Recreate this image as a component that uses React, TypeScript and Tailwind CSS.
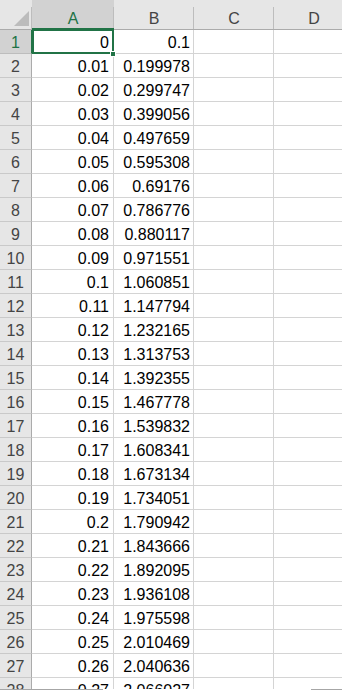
import React from "react";

const colA = [
  "0", "0.01", "0.02", "0.03", "0.04", "0.05", "0.06", "0.07", "0.08", "0.09",
  "0.1", "0.11", "0.12", "0.13", "0.14", "0.15", "0.16", "0.17", "0.18", "0.19",
  "0.2", "0.21", "0.22", "0.23", "0.24", "0.25", "0.26", "0.27",
];

const colB = [
  "0.1", "0.199978", "0.299747", "0.399056", "0.497659", "0.595308", "0.69176",
  "0.786776", "0.880117", "0.971551", "1.060851", "1.147794", "1.232165",
  "1.313753", "1.392355", "1.467778", "1.539832", "1.608341", "1.673134",
  "1.734051", "1.790942", "1.843666", "1.892095", "1.936108", "1.975598",
  "2.010469", "2.040636", "2.066027",
];

const font = { fontFamily: '"Liberation Sans", Arial, sans-serif' };

// header cell for the column letters
function ColHead({ label, w, active }: { label: string; w: string; active?: boolean }) {
  return (
    <div
      className={`${w} h-full shrink-0 relative flex items-center justify-center pt-[8px] ${
        active ? "bg-[#d2d2d2] text-[#217346]" : "text-[#444444]"
      }`}
    >
      {label}
      <div className="absolute right-0 top-[7px] bottom-0 w-px bg-[#bdbdbd]" />
      {active && <div className="absolute left-0 right-0 bottom-[-1px] h-[2px] bg-[#217346]" />}
    </div>
  );
}

export default function App() {
  return (
    <div className="w-[342px] h-[692px] bg-white flex flex-col overflow-hidden text-[16px]" style={font}>
      <div className="flex-1 overflow-hidden relative">
        {/* column headers */}
        <div className="flex h-[30px] bg-[#e6e6e6] border-b border-[#ababab]">
          <div className="w-[32px] h-full shrink-0 relative">
            <svg width="32" height="29" className="absolute left-0 top-0">
              <polygon points="29,11 29,26 14,26" fill="#bcbcbc" />
            </svg>
            <div className="absolute right-0 top-[7px] bottom-0 w-px bg-[#bdbdbd]" />
          </div>
          <ColHead label="A" w="w-[82px]" active />
          <ColHead label="B" w="w-[80px]" />
          <ColHead label="C" w="w-[80px]" />
          <ColHead label="D" w="w-[80px]" />
        </div>

        {/* rows */}
        {colA.map((a, i) => (
          <div key={i} className="flex h-[24px]">
            <div
              className={`w-[32px] shrink-0 flex items-center justify-center pt-[2px] border-r border-b ${
                i === 0
                  ? "bg-[#d2d2d2] text-[#217346] border-r-[#217346] border-b-[#bdbdbd]"
                  : "bg-[#e6e6e6] text-[#444444] border-r-[#ababab] border-b-[#c9c9c9]"
              }`}
            >
              {i + 1}
            </div>
            <div className="w-[82px] shrink-0 flex items-center justify-end pr-[4px] pt-[2px] border-r border-b border-[#d4d4d4] text-black">
              {a}
            </div>
            <div className="w-[80px] shrink-0 flex items-center justify-end pr-[3px] pt-[2px] border-r border-b border-[#d4d4d4] text-black">
              {colB[i]}
            </div>
            <div className="w-[80px] shrink-0 border-r border-b border-[#d4d4d4]" />
            <div className="w-[80px] shrink-0 border-r border-b border-[#d4d4d4]" />
          </div>
        ))}

        {/* active cell A1 */}
        <div className="absolute left-[32px] top-[29px] w-[82px] h-[25px] border-2 border-[#217346] pointer-events-none" />
        <div className="absolute left-[110px] top-[51px] w-[6px] h-[6px] bg-[#217346] border border-white" />
      </div>

      {/* sheet tab strip edge */}
      <div className="h-[3px] flex bg-white">
        <div className="w-[103px] border-t border-[#a6a6a6]" />
        <div className="flex-1" />
        <div className="w-[31px] border-t border-[#a6a6a6]" />
      </div>
    </div>
  );
}
